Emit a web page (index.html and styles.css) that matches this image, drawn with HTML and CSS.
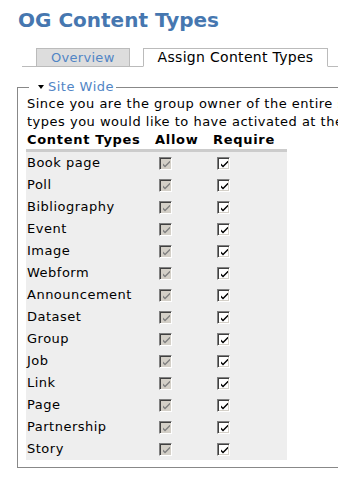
FILE: index.html
```html
<!DOCTYPE html>
<html lang="en">
<head>
  <meta charset="UTF-8">
  <title>OG Content Types</title>
  <link rel="stylesheet" href="styles.css">
</head>
<body>

<h1 class="title">OG Content Types</h1>

<ul class="tabs">
  <li><a href="#">Overview</a></li>
  <li class="active"><a href="#">Assign Content Types</a></li>
</ul>

<!-- site wide settings -->
<fieldset class="group">
  <legend><a href="#"><span class="arrow"></span>Site Wide</a></legend>
  <p class="intro">Since you are the group owner of the entire site, you may choose the content<br>types you would like to have activated at the site level for all of your groups.</p>
  <table class="types">
    <thead>
      <tr><th class="c-name">Content Types</th><th class="c-allow">Allow</th><th class="c-req">Require</th></tr>
    </thead>
    <tbody id="rows"></tbody>
  </table>
</fieldset>

<script>
  const types = ["Book page", "Poll", "Bibliography", "Event", "Image", "Webform", "Announcement",
    "Dataset", "Group", "Job", "Link", "Page", "Partnership", "Story"];

  const check = '<svg width="7" height="7" viewBox="0 0 7 7"><path d="M0 2.5v2l2 2 5-5v-2l-5 5z"/></svg>';
  const rows = document.getElementById("rows");

  types.forEach(name => {
    const tr = document.createElement("tr");
    tr.innerHTML = `<td>${name}</td>` +
      `<td><span class="cb disabled">${check}</span></td>` +
      `<td><span class="cb">${check}</span></td>`;
    rows.appendChild(tr);
  });
</script>
</body>
</html>
```

FILE: styles.css
```css
html, body { overflow: hidden; }
body {
  margin: 0;
  font-family: "DejaVu Sans", Verdana, sans-serif;
  font-size: 13px;
  line-height: 18px;
  letter-spacing: 0.5px;
  color: #000;
  background: #fff;
}
a { color: #5185c5; text-decoration: none; }

.title {
  margin: 8px 0 0 18px;
  font-size: 20px;
  line-height: 24px;
  font-weight: bold;
  letter-spacing: 0;
  color: #4677b0;
}

.tabs {
  display: flex;
  gap: 13px;
  list-style: none;
  margin: 16px 0 0 22px;
  padding: 0 0 0 14px;
  border-bottom: 1px solid #bbb;
}
.tabs li { margin-bottom: -1px; }
.tabs a {
  display: block;
  padding: 0 14px;
  line-height: 17px;
  letter-spacing: 0.3px;
  border: 1px solid #bbb;
  background: #ddd;
}
.tabs .active a {
  font-size: 14px;
  background: #fff;
  color: #000;
  border-bottom-color: #fff;
}

.group {
  width: 560px;
  margin: 12px 0 0 17px;
  padding: 0 8px 7px;
  border: 1px solid #888;
}
.group legend {
  margin-left: 3px;
  padding: 0 2px 0 9px;
  line-height: 16px;
}
.arrow {
  display: inline-block;
  width: 0;
  height: 0;
  margin: 0 4px 2px 0;
  border-left: 3.5px solid transparent;
  border-right: 3.5px solid transparent;
  border-top: 4px solid #000;
  vertical-align: middle;
}

.intro {
  margin: 0;
  padding-left: 1px;
  white-space: nowrap;
}

.types {
  border-collapse: collapse;
  width: 261px;
}
.types th {
  text-align: left;
  padding: 0 1px;
  letter-spacing: 0.7px;
  border-bottom: 3px solid #ccc;
}
.c-name { width: 126px; }
.c-allow { width: 56px; }
.types td {
  height: 22px;
  padding: 0 1px;
  vertical-align: middle;
  background: #eee;
}

.cb {
  display: inline-flex;
  align-items: center;
  justify-content: center;
  box-sizing: border-box;
  width: 13px;
  height: 13px;
  margin-left: 4px;
  vertical-align: middle;
  border: 1px solid;
  border-color: #808080 #fff #fff #808080;
  box-shadow: inset 1px 1px 0 #404040, inset -1px -1px 0 #d4d0c8;
  background: #fff;
  fill: #000;
}
.cb svg { display: block; margin: 1px 0 0 1px; }
.cb.disabled {
  background: #d4d0c8;
  fill: #808080;
}
```
